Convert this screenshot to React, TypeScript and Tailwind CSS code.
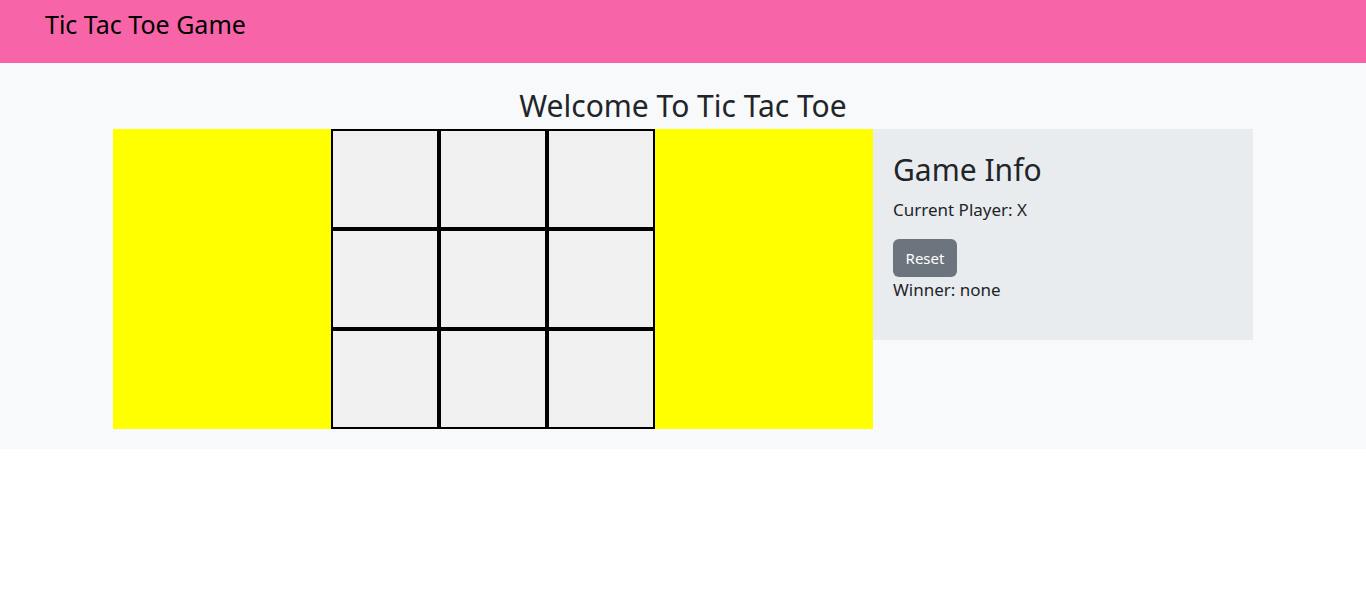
import React from "react";

export default function App() {
  const cells = Array.from({ length: 9 });
  return (
    <div className="min-h-[608px] bg-white text-[#212529]" style={{ fontFamily: '"Noto Sans", "Open Sans", sans-serif' }}>
      <header className="h-[63px] bg-[#f864a8] pl-[45px] pt-[7px]">
        <span className="text-[25px] leading-[34px] text-black">Tic Tac Toe Game</span>
      </header>
      <main className="bg-[#f8f9fa] pb-[20px]">
        <h2 className="text-center text-[30px] leading-[38px] pt-[24px] pb-[4px]">Welcome To Tic Tac Toe</h2>
        <div className="mx-auto flex w-[1140px]">
          <div className="flex h-[300px] w-[760px] justify-center bg-[#ffff00]">
            <div className="grid h-[300px] w-[324px] grid-cols-3 grid-rows-3">
              {cells.map((_, i) => (
                <div key={i} className="border-2 border-black bg-[#f0f0f0]" />
              ))}
            </div>
          </div>
          <div className="h-[211px] w-[380px] bg-[#e9ecef] px-[20px] pt-[22px]">
            <h2 className="mb-[9px] text-[30px] leading-[38px]">Game Info</h2>
            <p className="mb-[17px] text-[17px] leading-[24px]">Current Player: X</p>
            <button className="h-[38px] w-[64px] rounded-[6px] bg-[#6c757d] text-[15px] text-white">Reset</button>
            <p className="mt-[1px] text-[17px] leading-[24px]">Winner: none</p>
          </div>
        </div>
      </main>
    </div>
  );
}
